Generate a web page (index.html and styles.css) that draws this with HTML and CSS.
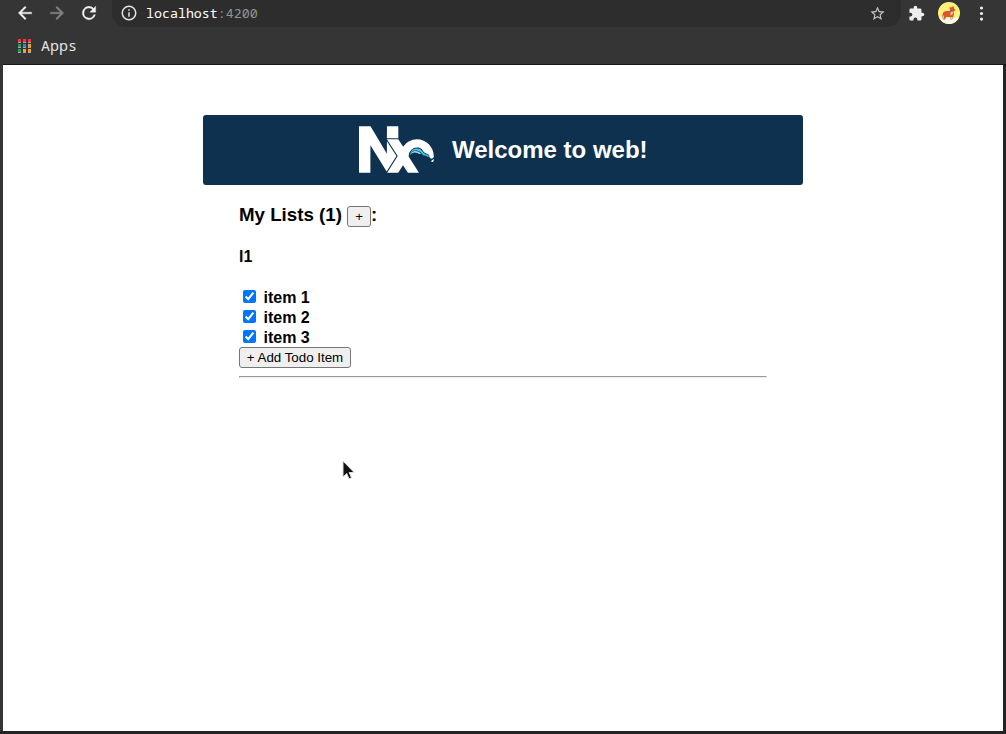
FILE: index.html
```
<!DOCTYPE html>
<html lang="en">
<head>
<meta charset="utf-8">
<title>Web</title>
<link rel="stylesheet" href="styles.css">
</head>
<body>
<div class="browser">
  <div class="toolbar">
    <svg class="tool back" viewBox="0 0 24 24"><path d="M20 11H7.8l5.6-5.6L12 4l-8 8 8 8 1.4-1.4L7.8 13H20z"/></svg>
    <svg class="tool forward" viewBox="0 0 24 24"><path d="m12 4-1.4 1.4 5.6 5.6H4v2h12.2l-5.6 5.6L12 20l8-8z"/></svg>
    <svg class="tool reload" viewBox="0 0 24 24"><path d="M17.65 6.35A8 8 0 1 0 19.73 14h-2.08A6 6 0 1 1 12 6c1.66 0 3.14.69 4.22 1.78L13 11h7V4z"/></svg>
    <div class="address">
      <svg class="info" viewBox="0 0 24 24"><path d="M11 7h2v2h-2zm0 4h2v6h-2zm1-9a10 10 0 1 0 0 20 10 10 0 0 0 0-20zm0 18a8 8 0 1 1 0-16 8 8 0 0 1 0 16z"/></svg>
      <span class="url">localhost<span class="port">:4200</span></span>
      <svg class="star" viewBox="0 0 24 24"><path d="m22 9.24-7.19-.62L12 2 9.19 8.63 2 9.24l5.46 4.73L5.82 21 12 17.27 18.18 21l-1.63-7.03zM12 15.4l-3.76 2.27 1-4.28-3.32-2.88 4.38-.38L12 6.1l1.71 4.04 4.38.38-3.32 2.88 1 4.28z"/></svg>
    </div>
    <svg class="puzzle" viewBox="0 0 24 24"><path d="M20.5 11H19V7a2 2 0 0 0-2-2h-4V3.500a2.500 2.500 0 0 0-5 0V5H4a2 2 0 0 0-2 2v3.800h1.500a2.700 2.700 0 0 1 0 5.400H2V20a2 2 0 0 0 2 2h3.800v-1.500a2.700 2.700 0 0 1 5.400 0V22H17a2 2 0 0 0 2-2v-4h1.500a2.500 2.500 0 0 0 0-5z"/></svg>
    <svg class="avatar" viewBox="0 0 22 22">
      <circle cx="11" cy="11" r="11" fill="#fff27a"/>
      <path d="M1 15.500h20a11 11 0 0 1-20 0z" fill="#fffbe8"/>
      <path d="m11.500 5 1.500.5L15.500 4l.5 2.500 1.500 1.500-2 2 .5 2.500-1 3-1 2h-1.500V15H8l-1 2.500H5L4 14l1.500-4L8 9h4z" fill="#dc5727"/>
      <path d="M12.500 10.500 15 9l-.5 3.500-2 1zM4.500 13 6 14v2.500H4.500zm8.500 2h1.500v2.500H13z" fill="#f4c9a7"/>
      <path d="m12 8.500 3-.2v1l-3 .2z" fill="#8b6a60"/>
    </svg>
    <svg class="more" viewBox="0 0 24 24"><circle cx="12" cy="5" r="2"/><circle cx="12" cy="12" r="2"/><circle cx="12" cy="19" r="2"/></svg>
  </div>
  <div class="bookmarks">
    <span class="apps-grid"><i class="red"></i><i class="red"></i><i class="red"></i><i class="green"></i><i class="blue"></i><i class="yellow"></i><i class="green"></i><i class="yellow"></i><i class="yellow"></i></span>
    <span>Apps</span>
  </div>
  <div class="page">
    <main class="app">
      <header class="banner">
        <svg class="logo" viewBox="0 0 262 163">
          <g fill="#fff">
            <path d="M130.680 104.590 97.490 52.710 97.440 96.300 40.240 0H0v162.570h39.790l.13-96.180 56.610 91.870z"/>
            <path d="M97.500 41.790h39.740l.09-.46V0H97.540l-.05 41.330z"/>
            <path d="M261.460 105.270C261.340 73.030 235.170 45.450 202.910 45.450A58.500 58.500 0 0 0 154 71.810l-.21-.36-16.560-26H97.500l37.750 59.120-36.840 58H137l16.790-25.790 17.090 25.790h38.600l-35-55.080a7.800 7.800 0 0 1-.92-3.490 29.330 29.330 0 0 1 29.330-29.330c16.220 0 18.930 9.700 22.430 14.260 6.910 9 20.710 5.060 20.710 16.800 0 3.740 3.830 7.660 8.130 7.660 4.340 0 7.300-4.240 7.300-8.010z"/>
            <path d="M261.500 113.680c.4 2.740 0 5.540-1.120 8.070-2.200 5.090-5.870 3.390-5.870 3.390s-3.160-1.540-1.240-4.490c2.130-3.290 6.340-2.910 8.230-6.970z"/>
          </g>
          <path fill="#96d8e9" d="M198.660 86.860a22.500 22.500 0 0 0-21.470 14.570 22 22 0 0 1 25.540-8.060c4.320 1.760 10 4.600 14.500 3.080a22.900 22.900 0 0 0-18.570-9.590z"/>
          <path fill="#48c4e5" d="M243.750 106.420c0-4.870-2.650-6-8.150-8-4.080-1.420-8.710-3.020-12.080-7.420-.66-.87-1.270-1.850-1.920-2.890a22.500 22.500 0 0 0-5.810-7c-3.210-2.360-7.420-3.510-12.880-3.510a27 27 0 0 0-25 16.750 26.260 26.260 0 0 1 43.630 4.230 8.130 8.130 0 0 0 9.110 3.640c5.370-1.150 5 3.930 13.110 5.650z"/>
        </svg>
        <h1 class="title">Welcome to web!</h1>
      </header>
      <section class="lists">
        <h3 class="lists-title">My Lists (1) <button class="button">+</button>:</h3>
        <h4 class="list-name">l1</h4>
        <label class="item"><input type="checkbox" class="check" checked>item 1</label>
        <label class="item"><input type="checkbox" class="check" checked>item 2</label>
        <label class="item"><input type="checkbox" class="check" checked>item 3</label>
        <button class="button add">+ Add Todo Item</button>
        <hr class="rule">
      </section>
    </main>
  </div>
</div>
<svg class="cursor" viewBox="0 0 14 20"><path d="M1 1v16l3.700-3.500 2.300 5.300 2.500-1.100-2.300-5.200h5z" fill="#111" stroke="#ddd" stroke-width="1"/></svg>
</body>
</html>
```
FILE: styles.css
```
* { box-sizing: border-box; }
body { margin: 0; overflow: hidden; background: #353535; font-family: "Liberation Sans", Arial, sans-serif; }
.browser { height: 734px; padding-left: 3px; border-bottom: 3px solid #242424; display: flex; flex-direction: column; }
.toolbar { height: 27px; flex: none; display: flex; align-items: center; padding: 0 0 1px 12px; }
.tool { width: 20px; height: 20px; margin-right: 12px; flex: none; fill: #f2f2f2; stroke: #f2f2f2; stroke-width: 0.4; }
.forward { fill: #858585; stroke: #858585; }
.toolbar .reload { margin-right: 13px; }
.address { width: 789px; height: 27px; margin-top: 1px; padding: 0 15px 1px 8px; display: flex; align-items: center; background: #2d2d2d; border-radius: 0 0 14px 14px; }
.info { width: 18px; height: 18px; fill: #e4e4e4; }
.url { margin-left: 8px; font: 13.3px "Noto Sans Mono", "DejaVu Sans Mono", monospace; color: #fff; }
.port { color: #949494; }
.star { width: 17px; height: 17px; margin-left: auto; fill: #c6c6c6; }
.puzzle { width: 17px; height: 17px; margin-left: 7px; fill: #eee; }
.avatar { width: 22px; height: 22px; margin-left: 13px; }
.more { width: 19px; height: 19px; margin-left: 12px; fill: #eee; }
.bookmarks { height: 38px; flex: none; display: flex; align-items: center; gap: 10px; padding: 0 0 1px 15px; border-bottom: 1px solid #171717; color: #e2e2e2; font: 15px "Noto Sans Mono", "DejaVu Sans Mono", monospace; }
.apps-grid { display: grid; grid-template-columns: repeat(3, 3px); grid-auto-rows: 4px; gap: 1px 2px; margin-top: 1px; }
.apps-grid i { border-bottom: 1px solid #aaa; }
.red { background: #f5333f; }
.green { background: #2b9b58; }
.blue { background: #168bf2; }
.yellow { background: #f5a12b; }
.page { flex: 1; background: #fff; border-right: 3px solid #242424; }
.app { width: 600px; margin: 50px auto 0; }
.banner { height: 70px; display: flex; align-items: center; padding-left: 156px; background: #0e3150; border-radius: 3px; }
.logo { width: 75px; height: 47px; margin-bottom: 1px; }
.title { margin: 0 0 0 18px; color: #fff; font-size: 24px; line-height: 28px; }
.lists { padding: 19px 36px 0; }
.lists-title { margin: 0; font-size: 18.72px; line-height: 22px; }
.list-name { margin: 21px 0; font-size: 16px; line-height: 18px; }
.item { display: flex; align-items: center; height: 20px; padding-top: 1px; font-size: 16px; font-weight: bold; }
.check { width: 13px; height: 13px; margin: 0 7.5px 3px 4px; }
.button { padding: 1px 6px; height: 21px; border: 1px solid #767676; border-radius: 3px; background: #efefef; color: #000; font: 13.333px "Liberation Sans", Arial, sans-serif; }
.lists-title .button { width: 24px; }
.add { display: block; width: 112px; }
.rule { margin: 8px 0 0; }
.cursor { position: absolute; left: 342px; top: 460px; width: 14px; height: 20px; }
```
